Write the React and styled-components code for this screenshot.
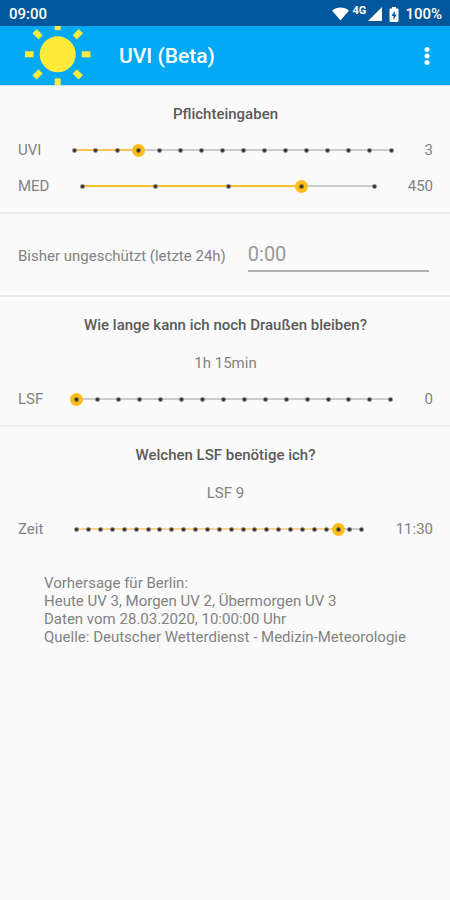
import React, { useState } from "react";
import styled, { createGlobalStyle } from "styled-components";

////// STYLING ////////
const GlobalStyle = createGlobalStyle`
  * {
    box-sizing: border-box;
  }

  body {
    margin: 0;
    background: #fafafa;
    color: #828282;
    font-family: Roboto, "Liberation Sans", sans-serif;
    font-size: 15px;
    line-height: 18px;
  }
`;

const StatusBar = styled.div`
  display: flex;
  align-items: center;
  justify-content: space-between;
  height: 26px;
  padding: 2px 8px 0 9px;
  background: #01579b;
  color: #fff;
  font-weight: 500;
`;

const StatusIcons = styled.div`
  display: flex;
  align-items: center;

  svg {
    display: block;
  }
`;

const Network = styled.span`
  align-self: flex-start;
  margin: 0 2px 0 4px;
  font-size: 11px;
  line-height: 12px;
  font-weight: 700;
`;

const Percent = styled.span`
  margin-left: 1px;
`;

const Toolbar = styled.header`
  display: flex;
  align-items: center;
  height: 60px;
  padding: 0 12px 0 25px;
  background: #03a9f4;
  border-bottom: 1px solid #cfe6f2;
  color: #fff;

  svg {
    display: block;
  }
`;

const Title = styled.h1`
  flex: 1;
  margin: 0 0 0 28px;
  font-size: 21px;
  line-height: 28px;
  font-weight: 500;
`;

const MenuButton = styled.button`
  display: flex;
  justify-content: center;
  width: 22px;
  padding: 0;
  border: 0;
  background: none;
  color: inherit;
  cursor: pointer;
`;

const Section = styled.section`
  padding: 19px 17px 8px 18px;
  border-bottom: ${(props) => (props.$last ? "0" : "2px solid #ebebeb")};
`;

const Heading = styled.h2`
  margin: 0 0 9px;
  font-size: 15px;
  line-height: 18px;
  font-weight: 500;
  text-align: center;
  color: #5a5a5a;
`;

const Result = styled.output`
  display: block;
  margin: 20px 0 9px;
  text-align: center;
`;

const Row = styled.div`
  display: flex;
  align-items: center;
  gap: 27px;
  height: 36px;
`;

const SliderBox = styled.div`
  flex: 1;
  display: grid;
  align-items: center;

  > * {
    grid-area: 1 / 1;
  }
`;

const Range = styled.input`
  appearance: none;
  width: 100%;
  height: 21px;
  margin: 0;
  background: linear-gradient(
      to right,
      ${(props) => props.$fill} ${(props) => props.$percent}%,
      #cccccc ${(props) => props.$percent}%
    )
    center / calc(100% - 13px) 2px no-repeat;
  cursor: pointer;

  &::-webkit-slider-thumb {
    appearance: none;
    width: 13px;
    height: 13px;
    border-radius: 50%;
    background: #fcbc1c;
  }
`;

const Ticks = styled.div`
  z-index: 1;
  display: flex;
  justify-content: space-between;
  padding: 0 4px;
  pointer-events: none;
`;

const Tick = styled.span`
  width: 5px;
  height: 5px;
  background: radial-gradient(circle, #333 1px, transparent 3px);
`;

const TimeRow = styled.div`
  display: flex;
  align-items: center;
  gap: 22px;
  padding: 25px 21px 23px 18px;
  border-bottom: 2px solid #ebebeb;
`;

const TimeInput = styled.input`
  flex: 1;
  min-width: 0;
  height: 33px;
  padding: 0 0 2px;
  border: 0;
  border-bottom: 2px solid #b0b0b0;
  background: none;
  color: #808080;
  font-family: inherit;
  font-size: 20px;

  &::placeholder {
    color: #999;
  }
`;

const Forecast = styled.p`
  margin: 0;
  padding: 19px 20px 20px 44px;
`;

const UVI_MAX = 15;
const LSF_MAX = 15;
const MED_VALUES = [150, 250, 350, 450, 600];
const TIME_STEPS = 24;

// every step is half an hour, starting at 0:30
const formatTime = (step) => {
  const minutes = (step + 1) * 30;
  return `${Math.floor(minutes / 60)}:${String(minutes % 60).padStart(2, "0")}`;
};

function Sun() {
  return (
    <svg width="66" height="59" viewBox="0 0 66 59" fill="#ffeb3b" aria-hidden="true">
      <circle cx="32.7" cy="28.3" r="18" />
      {[0, 45, 90, 135, 180, 225, 270, 315].map((angle) => (
        <rect
          key={angle}
          x="56.8"
          y="25.3"
          width="8.6"
          height="6"
          transform={`rotate(${angle} 32.7 28.3)`}
        />
      ))}
    </svg>
  );
}

function SliderRow({ id, label, max, value, text, fill, onChange }) {
  return (
    <Row>
      <label htmlFor={id}>{label}</label>
      <SliderBox>
        <Range
          id={id}
          type="range"
          min="0"
          max={max}
          value={value}
          $fill={fill}
          $percent={(value / max) * 100}
          onChange={(ev) => onChange(Number(ev.target.value))}
        />
        <Ticks>
          {Array.from({ length: max + 1 }, (_, i) => (
            <Tick key={i} />
          ))}
        </Ticks>
      </SliderBox>
      <span>{text}</span>
    </Row>
  );
}

export default function App() {
  const [uvi, setUvi] = useState(3);
  const [med, setMed] = useState(3);
  const [lsf, setLsf] = useState(0);
  const [time, setTime] = useState(22);
  const [exposed, setExposed] = useState("");

  return (
    <>
      <GlobalStyle />
      <StatusBar>
        <span>09:00</span>
        <StatusIcons>
          <svg width="17" height="14" viewBox="0 0 17 14" fill="#fff">
            <path d="M0 3.4C4.8-.6 12.2-.6 17 3.4L8.5 13.6z" />
          </svg>
          <Network>4G</Network>
          <svg width="14" height="14" viewBox="0 0 14 14" fill="#fff">
            <path d="M14 0v14H0z" />
          </svg>
          <svg width="22" height="15" viewBox="0 0 22 15" fill="#fff">
            <path
              fillRule="evenodd"
              d="M10 0h4v1.5h1.5q1 0 1 1V14q0 1-1 1h-7q-1 0-1-1V2.5q0-1 1-1H10zM12.8 3.8L9.5 9h2v4l3.2-5.4h-1.9z"
            />
          </svg>
          <Percent>100%</Percent>
        </StatusIcons>
      </StatusBar>

      <Toolbar>
        <Sun />
        <Title>UVI (Beta)</Title>
        <MenuButton type="button" aria-label="Menü">
          <svg width="6" height="20" viewBox="0 0 6 20" fill="currentColor">
            <circle cx="3" cy="3.6" r="2.5" />
            <circle cx="3" cy="10" r="2.5" />
            <circle cx="3" cy="16.4" r="2.5" />
          </svg>
        </MenuButton>
      </Toolbar>

      <main>
        <Section>
          <Heading>Pflichteingaben</Heading>
          <SliderRow
            id="uvi"
            label="UVI"
            max={UVI_MAX}
            value={uvi}
            text={uvi}
            fill="#fac45c"
            onChange={setUvi}
          />
          <SliderRow
            id="med"
            label="MED"
            max={MED_VALUES.length - 1}
            value={med}
            text={MED_VALUES[med]}
            fill="#f8c22e"
            onChange={setMed}
          />
        </Section>

        <TimeRow>
          <label htmlFor="exposed">Bisher ungeschützt (letzte 24h)</label>
          <TimeInput
            id="exposed"
            type="text"
            placeholder="0:00"
            value={exposed}
            onChange={(ev) => setExposed(ev.target.value)}
          />
        </TimeRow>

        <Section>
          <Heading>Wie lange kann ich noch Draußen bleiben?</Heading>
          <Result htmlFor="lsf">1h 15min</Result>
          <SliderRow
            id="lsf"
            label="LSF"
            max={LSF_MAX}
            value={lsf}
            text={lsf}
            fill="#fac45c"
            onChange={setLsf}
          />
        </Section>

        <Section $last>
          <Heading>Welchen LSF benötige ich?</Heading>
          <Result htmlFor="time">LSF 9</Result>
          <SliderRow
            id="time"
            label="Zeit"
            max={TIME_STEPS}
            value={time}
            text={formatTime(time)}
            fill="#fad592"
            onChange={setTime}
          />
        </Section>

        <Forecast>
          Vorhersage für Berlin:
          <br />
          Heute UV 3, Morgen UV 2, Übermorgen UV 3
          <br />
          Daten vom 28.03.2020, 10:00:00 Uhr
          <br />
          Quelle: Deutscher Wetterdienst - Medizin-Meteorologie
        </Forecast>
      </main>
    </>
  );
}
